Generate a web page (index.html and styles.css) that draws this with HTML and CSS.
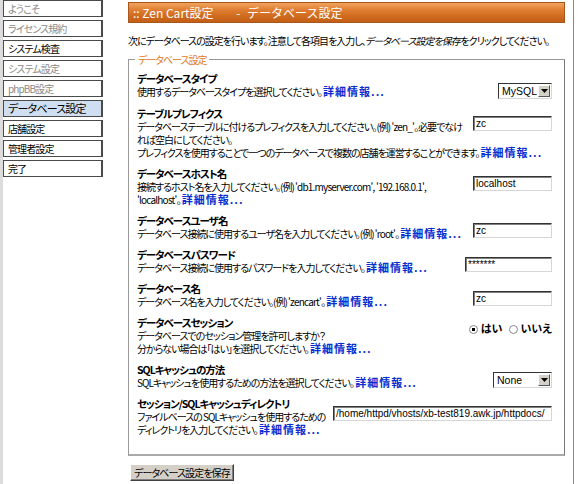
FILE: index.html
```html
<!DOCTYPE html>
<html lang="ja">
<head>
    <meta charset="utf-8">
    <title>Zen Cart設定 - データベース設定</title>
    <link rel="stylesheet" href="styles.css">
</head>
<body>
    <div class="page">
        <!-- Install steps -->
        <div class="sidebar">
            <ul class="steps">
                <li class="done">ようこそ</li>
                <li class="done">ライセンス規約</li>
                <li>システム検査</li>
                <li class="done">システム設定</li>
                <li class="done">phpBB設定</li>
                <li class="current">データベース設定</li>
                <li>店舗設定</li>
                <li>管理者設定</li>
                <li>完了</li>
            </ul>
        </div>

        <div class="main">
            <h1 class="page-title">:: Zen Cart設定 <span class="sep">-</span> データベース設定</h1>
            <p class="intro">次にデータベースの設定を行います。注意して各項目を入力し、<em>データベース設定を保存</em>をクリックしてください。</p>

            <form>
                <fieldset>
                    <legend>データベース設定</legend>

                    <div class="section">
                        <div class="select select-type"><span class="value">MySQL</span><span class="arrow"></span></div>
                        <label>データベースタイプ</label>
                        <p>使用するデータベースタイプを選択してください。 <a href="#">詳細情報...</a></p>
                    </div>

                    <div class="section">
                        <input type="text" class="field" value="zc">
                        <label>テーブルプレフィクス</label>
                        <p>データベーステーブルに付けるプレフィクスを入力してください。(例) <span class="en">'zen_'</span>。必要でなけ<br>れば空白にしてください。<br>プレフィクスを使用することで一つのデータベースで複数の店舗を運営することができます。 <a href="#">詳細情報...</a></p>
                    </div>

                    <div class="section">
                        <input type="text" class="field" value="localhost">
                        <label>データベースホスト名</label>
                        <p>接続するホスト名を入力してください。(例) <span class="en">'db1.myserver.com', '192.168.0.1',</span><br><span class="en">'localhost'</span>。 <a href="#">詳細情報...</a></p>
                    </div>

                    <div class="section">
                        <input type="text" class="field" value="zc">
                        <label>データベースユーザ名</label>
                        <p>データベース接続に使用するユーザ名を入力してください。(例) <span class="en">'root'</span>。 <a href="#">詳細情報...</a></p>
                    </div>

                    <div class="section">
                        <input type="text" class="field field-pass" value="*******">
                        <label>データベースパスワード</label>
                        <p>データベース接続に使用するパスワードを入力してください。 <a href="#">詳細情報...</a></p>
                    </div>

                    <div class="section">
                        <input type="text" class="field" value="zc">
                        <label>データベース名</label>
                        <p>データベース名を入力してください。(例) <span class="en">'zencart'</span>。 <a href="#">詳細情報...</a></p>
                    </div>

                    <div class="section">
                        <div class="radios">
                            <span class="radio checked"></span> はい
                            <span class="radio"></span> いいえ
                        </div>
                        <label>データベースセッション</label>
                        <p>データベースでのセッション管理を許可しますか？<br>分からない場合は「はい」を選択してください。 <a href="#">詳細情報...</a></p>
                    </div>

                    <div class="section">
                        <div class="select select-cache"><span class="value">None</span><span class="arrow"></span></div>
                        <label>SQLキャッシュの方法</label>
                        <p>SQLキャッシュを使用するための方法を選択してください。 <a href="#">詳細情報...</a></p>
                    </div>

                    <div class="section">
                        <input type="text" class="field field-dir" value="/home/httpd/vhosts/xb-test819.awk.jp/httpdocs/">
                        <label>セッション/SQLキャッシュディレクトリ</label>
                        <p>ファイルベースの SQLキャッシュを使用するための<br>ディレクトリを入力してください。 <a href="#">詳細情報...</a></p>
                    </div>
                </fieldset>

                <button type="submit" class="btn-save">データベース設定を保存</button>
            </form>
        </div>
    </div>
</body>
</html>
```

FILE: styles.css
```css
body {
    margin: 0;
    font-family: "Noto Sans CJK JP", "Liberation Sans", sans-serif;
    font-size: 10px;
    line-height: 13px;
    letter-spacing: -1px;
    color: #000;
    background-color: #fff;
    font-feature-settings: "palt";
}

.page {
    display: flex;
    width: 573px;
    height: 484px;
    border-right: 1px solid #888;
    overflow: hidden;
}

/* left column with install steps */
.sidebar {
    width: 100px;
    padding-left: 3px;
    background: linear-gradient(to right, #dcdcdc 3px, transparent 3px);
}

.steps {
    list-style: none;
    margin: 0;
    padding: 0;
}

.steps li {
    height: 15px;
    line-height: 15px;
    padding-left: 4px;
    margin-bottom: 3px;
    border: 1px solid #4a4a4a;
    border-right-width: 2px;
    background-color: #fff;
    color: #000;
    font-size: 10px;
    letter-spacing: -0.9px;
    white-space: nowrap;
}

.steps li.done {
    color: #8a8a8a;
}

.steps li.current {
    background-color: #cfdff1;
    font-size: 11px;
    letter-spacing: -0.8px;
}

.main {
    width: 437px;
    margin-left: 25px;
    padding-top: 2px;
}

.page-title {
    margin: 0;
    height: 19px;
    line-height: 19px;
    padding-left: 4px;
    font-size: 12px;
    font-weight: normal;
    letter-spacing: 0;
    font-feature-settings: normal;
    color: #fff;
    border: 1px solid #a9561c;
    background: linear-gradient(#f0a45e, #e07f33 35%, #cf6a1e 70%, #c35f16);
}

.page-title .sep {
    margin: 0 4px 0 20px;
}

.intro {
    margin: 11px 0 6px;
    white-space: nowrap;
}

.intro em {
    display: inline-block;
    font-style: normal;
    transform: skewX(-12deg);
}

fieldset {
    margin: 0;
    padding: 6px 12px 10px 8px;
    border: 1px solid #999;
    border-right-color: #777;
    border-bottom: 2px solid #aaa;
}

legend {
    padding: 0 3px;
    margin-left: -2px;
    color: #e07a24;
}

.section {
    overflow: hidden;
    padding-bottom: 8px;
}

.section label {
    display: block;
    font-size: 10.5px;
    font-weight: bold;
    letter-spacing: -1px;
}

.section p {
    margin: 0;
    white-space: nowrap;
}

.section .en {
    letter-spacing: -0.8px;
}

.section a {
    color: #0a2ecf;
    font-size: 11px;
    font-weight: bold;
    letter-spacing: 1px;
    text-decoration: none;
}

.field {
    float: right;
    width: 79px;
    height: 15px;
    margin: 9px 0 0 6px;
    padding: 0 2px;
    box-sizing: border-box;
    border: 1px solid;
    border-color: #333 #d6d6d6 #d6d6d6 #333;
    box-shadow: inset 1px 1px 0 #808080;
    font-family: "Liberation Sans", sans-serif;
    font-size: 10px;
    letter-spacing: 0;
    color: #000;
}

.field-pass {
    width: 87px;
}

.field-dir {
    width: 219px;
}

.select {
    float: right;
    display: flex;
    height: 16px;
    margin: 11px 0 0 6px;
    box-sizing: border-box;
    border: 1px solid;
    border-color: #333 #d6d6d6 #d6d6d6 #333;
    background-color: #fff;
    font-family: "Liberation Sans", sans-serif;
    font-size: 10.5px;
    line-height: 14px;
    letter-spacing: 0;
}

.select .value {
    flex: 1;
    padding-left: 3px;
}

.select .arrow {
    width: 12px;
    margin: 1px;
    box-sizing: border-box;
    border: 1px solid;
    border-color: #fff #555 #555 #fff;
    background: #d4d0c8 url("data:image/svg+xml,%3Csvg xmlns='http://www.w3.org/2000/svg' width='7' height='4'%3E%3Cpath d='M0 0h7L3.5 4z' fill='%23000'/%3E%3C/svg%3E") no-repeat center;
}

.select-type {
    width: 54px;
}

.select-cache {
    width: 59px;
    margin-top: 9px;
}

.radios {
    float: right;
    margin: 6px 0 0 6px;
    font-size: 11px;
    font-weight: bold;
    letter-spacing: 0;
}

.radio {
    display: inline-block;
    width: 9px;
    height: 9px;
    margin-left: 4px;
    box-sizing: border-box;
    border: 1px solid #888;
    border-radius: 50%;
    background-color: #fff;
    vertical-align: -1px;
}

.radio.checked {
    background: radial-gradient(circle, #000 1.5px, #fff 2px);
}

.btn-save {
    margin: 8px 0 0 2px;
    height: 17px;
    padding: 0 3px;
    border: 1px solid;
    border-color: #fff #404040 #404040 #fff;
    box-shadow: inset -1px -1px 0 #808080;
    background-color: #d4d0c8;
    font-family: "Noto Sans CJK JP", sans-serif;
    font-size: 10px;
    line-height: 13px;
    letter-spacing: -0.9px;
    color: #000;
    font-feature-settings: "palt";
}
```
